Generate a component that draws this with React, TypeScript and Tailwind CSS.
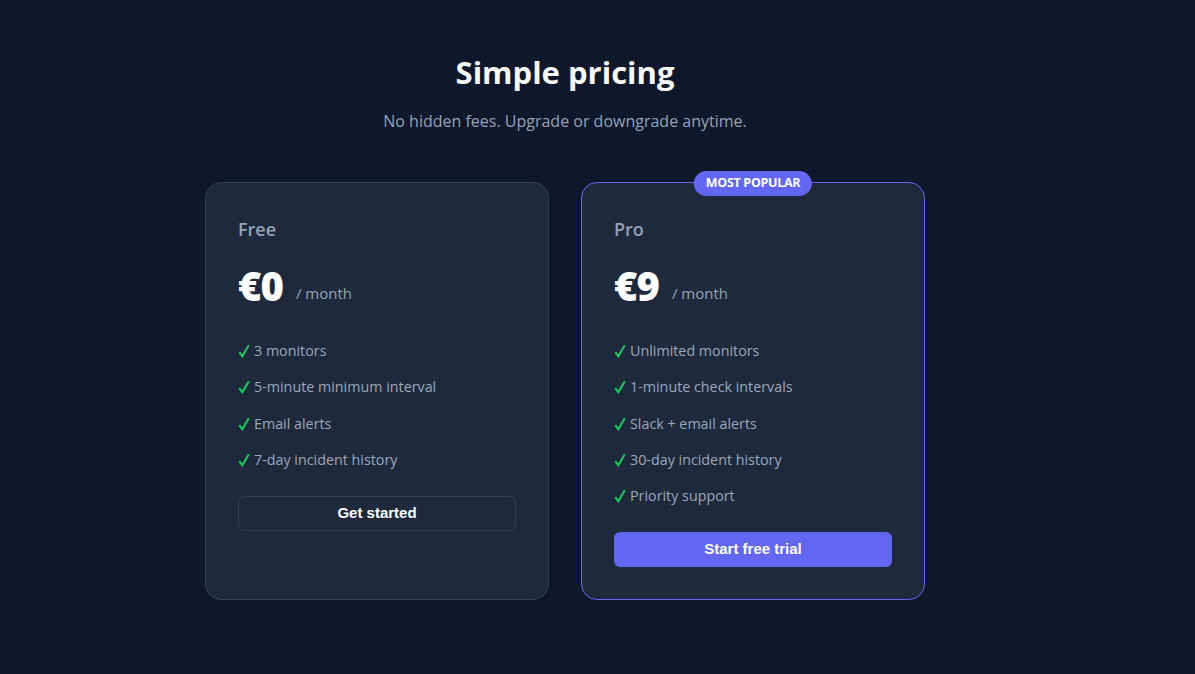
import React from 'react';

interface Plan {
  name: string;
  price: string;
  features: string[];
  cta: string;
  popular?: boolean;
}

const plans: Plan[] = [
  {
    name: 'Free',
    price: '€0',
    features: ['3 monitors', '5-minute minimum interval', 'Email alerts', '7-day incident history'],
    cta: 'Get started',
  },
  {
    name: 'Pro',
    price: '€9',
    features: ['Unlimited monitors', '1-minute check intervals', 'Slack + email alerts', '30-day incident history', 'Priority support'],
    cta: 'Start free trial',
    popular: true,
  },
];

const Check = () => (
  <svg width="12" height="14" viewBox="0 0 12 14" className="mr-[4px] shrink-0">
    <path d="M1.2 8.2 L4.3 12.2 L10.8 1.2" fill="none" stroke="#22c55e" strokeWidth="2.1" strokeLinejoin="miter" />
  </svg>
);

function PlanCard({ plan }: { plan: Plan }) {
  return (
    <div
      className={`relative flex-1 rounded-2xl border bg-[#1e293b] px-8 pt-8 pb-8 ${
        plan.popular ? 'border-[#6366f1]' : 'border-[#334155]'
      }`}
    >
      {plan.popular && (
        <div className="absolute left-1/2 top-[-12px] -translate-x-1/2 rounded-full bg-[#6366f1] px-3 h-[25px] flex items-center text-[12.5px] font-bold tracking-tight text-white">
          MOST POPULAR
        </div>
      )}

      <h3 className="text-[18px] leading-[28px] font-semibold text-[#94a3b8]">{plan.name}</h3>

      {/* Price */}
      <div className="mt-[23px] flex items-end gap-[13px]">
        <span className="text-[40px] leading-[40px] font-black text-white tracking-tight">{plan.price}</span>
        <span className="text-[15px] leading-[24px] text-[#94a3b8] mb-[1px]">/ month</span>
      </div>

      {/* Features */}
      <ul className="mt-[33px] flex flex-col gap-[12.3px]">
        {plan.features.map((f) => (
          <li key={f} className="flex items-center text-[14.3px] leading-[24px] text-[#9aa8bc]">
            <Check />
            {f}
          </li>
        ))}
      </ul>

      <button
        className={`mt-[24px] w-full h-[35px] rounded-md text-[15px] font-bold text-white ${
          plan.popular ? 'bg-[#6366f1]' : 'border border-[#334155] bg-transparent'
        }`}
        style={{ fontFamily: '"Liberation Sans", Arial, sans-serif' }}
      >
        {plan.cta}
      </button>
    </div>
  );
}

export default function App() {
  return (
    <div className="min-h-screen bg-[#0f172a] font-['Open_Sans',sans-serif] pt-[52px]">
      <div className="ml-[205px] w-[720px] text-center">
        <h1 className="text-[31px] leading-[40px] font-bold text-[#f8fafc]">Simple pricing</h1>
        <p className="mt-4 text-[16px] leading-[26px] text-[#94a3b8]">
          No hidden fees. Upgrade or downgrade anytime.
        </p>

        <div className="mt-12 flex gap-8 text-left">
          {plans.map((p) => (
            <PlanCard key={p.name} plan={p} />
          ))}
        </div>
      </div>
    </div>
  );
}
